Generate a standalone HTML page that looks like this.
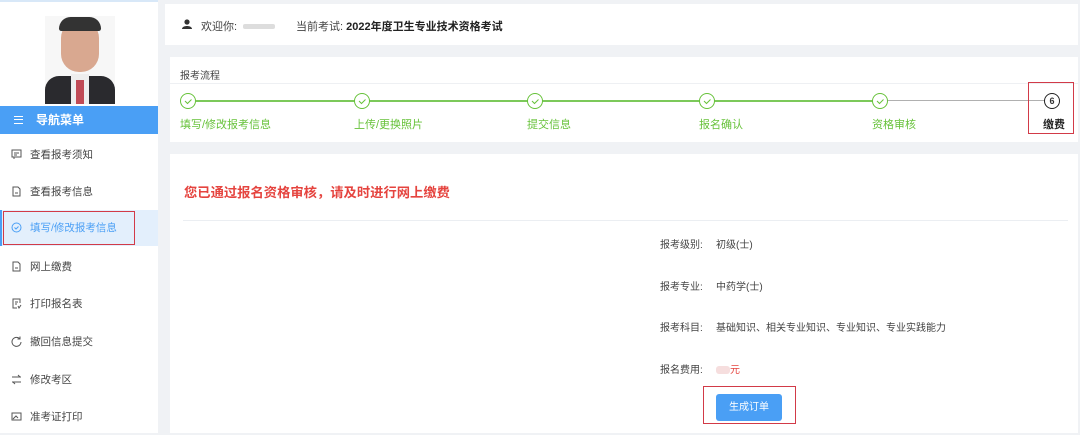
<!DOCTYPE html>
<html><head><meta charset="utf-8"><style>
*{margin:0;padding:0;box-sizing:border-box}
body{width:1080px;height:433px;overflow:hidden;background:#f0f2f5;font-family:"Liberation Sans","Noto Sans CJK SC",sans-serif;font-size:11px;color:#333;position:relative}
.abs{position:absolute}
.side{left:0;top:0;width:158px;height:433px;background:#fff;border-top:2px solid #d8e8f8}
.mi{position:absolute;left:0;width:158px;height:36px;line-height:36px;padding-left:30px;font-size:10.5px;color:#444}
.mi svg{position:absolute;left:11px;top:12px}
.card{background:#fff;position:absolute}
.step{position:absolute;top:93px;width:16px;height:16px;border:1.3px solid #67c23a;border-radius:50%;background:#fff}
.lbl{position:absolute;top:116px;font-size:11px;color:#67c23a}
.row{position:absolute;left:660px;font-size:10px;color:#444}
.row span{position:absolute;left:56px;white-space:nowrap}
</style></head><body>
<div class="abs side">
 <div class="abs" style="left:45px;top:14px;width:70px;height:88px;background:#f7f7f7;overflow:hidden">
  <div class="abs" style="left:16px;top:4px;width:38px;height:52px;border-radius:18px 18px 18px 18px;background:#d9a890"></div>
  <div class="abs" style="left:14px;top:1px;width:42px;height:14px;border-radius:20px 20px 4px 4px;background:#333"></div>
  <div class="abs" style="left:0;top:60px;width:70px;height:30px;border-radius:14px 14px 0 0;background:#2a2a2e"></div>
  <div class="abs" style="left:26px;top:58px;width:18px;height:30px;background:#eee"></div>
  <div class="abs" style="left:31px;top:64px;width:8px;height:24px;background:#c04a55"></div>
 </div>
 <div class="abs" style="left:0;top:104px;width:158px;height:28px;background:#4a9ff5;color:#fff;font-weight:bold;font-size:12px;line-height:28px;padding-left:36px">导航菜单
  <div class="abs" style="left:14px;top:10px;width:9px;height:8px;border-top:1.5px solid #fff;border-bottom:1.5px solid #fff"><div style="margin-top:2px;border-top:1.5px solid #fff"></div></div>
 </div>
 <div class="mi" style="top:135px"><svg width="11" height="11"><rect x="1" y="1" width="9" height="7" fill="none" stroke="#555"/><path d="M3 4h5M3 6h3M3 8v2" stroke="#555"/></svg>查看报考须知</div>
 <div class="mi" style="top:172px"><svg width="11" height="11"><path d="M2 1h5l2 2v7H2z" fill="none" stroke="#555"/><path d="M4 7h3" stroke="#555"/></svg>查看报考信息</div>
 <div class="mi" style="top:208px;background:#e3effc;color:#4a9ff5"><svg width="11" height="11"><circle cx="5.5" cy="5.5" r="4.5" fill="none" stroke="#4a9ff5"/><path d="M3.5 5.5l1.5 1.5 2.5-2.5" fill="none" stroke="#4a9ff5"/></svg>填写/修改报考信息</div>
 <div class="abs" style="left:0;top:208px;width:2px;height:36px;background:#4a9ff5"></div>
 <div class="abs" style="left:3px;top:209px;width:132px;height:34px;border:1.5px solid #d23a48"></div>
 <div class="mi" style="top:247px"><svg width="11" height="11"><path d="M2 1h5l2 2v7H2z" fill="none" stroke="#555"/><path d="M4 7h3" stroke="#555"/></svg>网上缴费</div>
 <div class="mi" style="top:284px"><svg width="11" height="11"><path d="M9 5V1H2v9h4M4 4h3M4 6h2M7 8l1 2 2-3" fill="none" stroke="#555"/></svg>打印报名表</div>
 <div class="mi" style="top:322px"><svg width="11" height="11"><path d="M9 3A4.5 4.5 0 1 0 10 6M9 0.5V3H6.5" fill="none" stroke="#555"/></svg>撤回信息提交</div>
 <div class="mi" style="top:360px"><svg width="11" height="11"><path d="M1 3h9M7 1l2 2M10 8H1M4 10L2 8" fill="none" stroke="#555"/></svg>修改考区</div>
 <div class="mi" style="top:397px"><svg width="11" height="11"><rect x="1" y="2" width="9" height="7" fill="none" stroke="#555"/><path d="M2 8l3-3 2 2" fill="none" stroke="#555"/></svg>准考证打印</div>
</div>

<div class="card" style="left:165px;top:4px;width:913px;height:41px">
 <svg class="abs" style="left:17px;top:15px" width="10" height="10"><circle cx="5" cy="3" r="2.6" fill="#333"/><path d="M0 10c0-4 10-4 10 0z" fill="#333"/></svg>
 <div class="abs" style="left:36px;top:14px;color:#444">欢迎你:</div>
 <div class="abs" style="left:78px;top:20px;width:32px;height:5px;background:#ddd;border-radius:2px"></div>
 <div class="abs" style="left:131px;top:14px;color:#444">当前考试: <b style="color:#222">2022年度卫生专业技术资格考试</b></div>
</div>

<div class="card" style="left:170px;top:57px;width:908px;height:85px">
 <div class="abs" style="left:10px;top:10px;font-size:10px;color:#444">报考流程</div>
 <div class="abs" style="left:0;top:26px;width:908px;height:1px;background:#eef0f3"></div>
</div>
<div class="abs" style="left:196px;top:100px;width:680px;height:2px;background:#7cc95a"></div>
<div class="abs" style="left:886px;top:100px;width:160px;height:1px;background:#b0b0b0"></div>
<div class="step" style="left:180px"></div><div class="step" style="left:354px"></div><div class="step" style="left:527px"></div><div class="step" style="left:699px"></div><div class="step" style="left:872px"></div>
<svg class="abs" style="left:180px;top:93px" width="720" height="16"><g fill="none" stroke="#67c23a" stroke-width="1"><path d="M5 8l2.5 2.5 4-4"/><path d="M179 8l2.5 2.5 4-4"/><path d="M352 8l2.5 2.5 4-4"/><path d="M524 8l2.5 2.5 4-4"/><path d="M697 8l2.5 2.5 4-4"/></g></svg>
<div class="abs" style="left:1044px;top:93px;width:16px;height:16px;border:1.3px solid #222;border-radius:50%;background:#fff;font-size:9px;font-weight:bold;text-align:center;line-height:14px">6</div>
<div class="lbl" style="left:180px">填写/修改报考信息</div>
<div class="lbl" style="left:354px">上传/更换照片</div>
<div class="lbl" style="left:527px">提交信息</div>
<div class="lbl" style="left:699px">报名确认</div>
<div class="lbl" style="left:872px">资格审核</div>
<div class="abs" style="left:1043px;top:116px;font-weight:bold;color:#222">缴费</div>
<div class="abs" style="left:1028px;top:82px;width:46px;height:52px;border:1.5px solid #d23a48"></div>

<div class="card" style="left:170px;top:154px;width:908px;height:279px">
 <div class="abs" style="left:14px;top:28px;font-size:13.3px;font-weight:bold;color:#e5443f">您已通过报名资格审核，请及时进行网上缴费</div>
 <div class="abs" style="left:13px;top:66px;width:885px;height:1px;background:#ebeef2"></div>
</div>
<div class="row" style="top:236px">报考级别:<span>初级(士)</span></div>
<div class="row" style="top:278px">报考专业:<span>中药学(士)</span></div>
<div class="row" style="top:319px">报考科目:<span>基础知识、相关专业知识、专业知识、专业实践能力</span></div>
<div class="row" style="top:361px">报名费用:<span><i style="display:inline-block;width:14px;height:8px;background:#f6dede;border-radius:3px;vertical-align:middle"></i><b style="font-weight:normal;color:#e5443f">元</b></span></div>
<div class="abs" style="left:716px;top:394px;width:66px;height:27px;background:#4a9ff5;border-radius:3px;color:#fff;font-size:10px;text-align:center;line-height:27px">生成订单</div>
<div class="abs" style="left:703px;top:386px;width:93px;height:38px;border:1.5px solid #d23a48"></div>
</body></html>
